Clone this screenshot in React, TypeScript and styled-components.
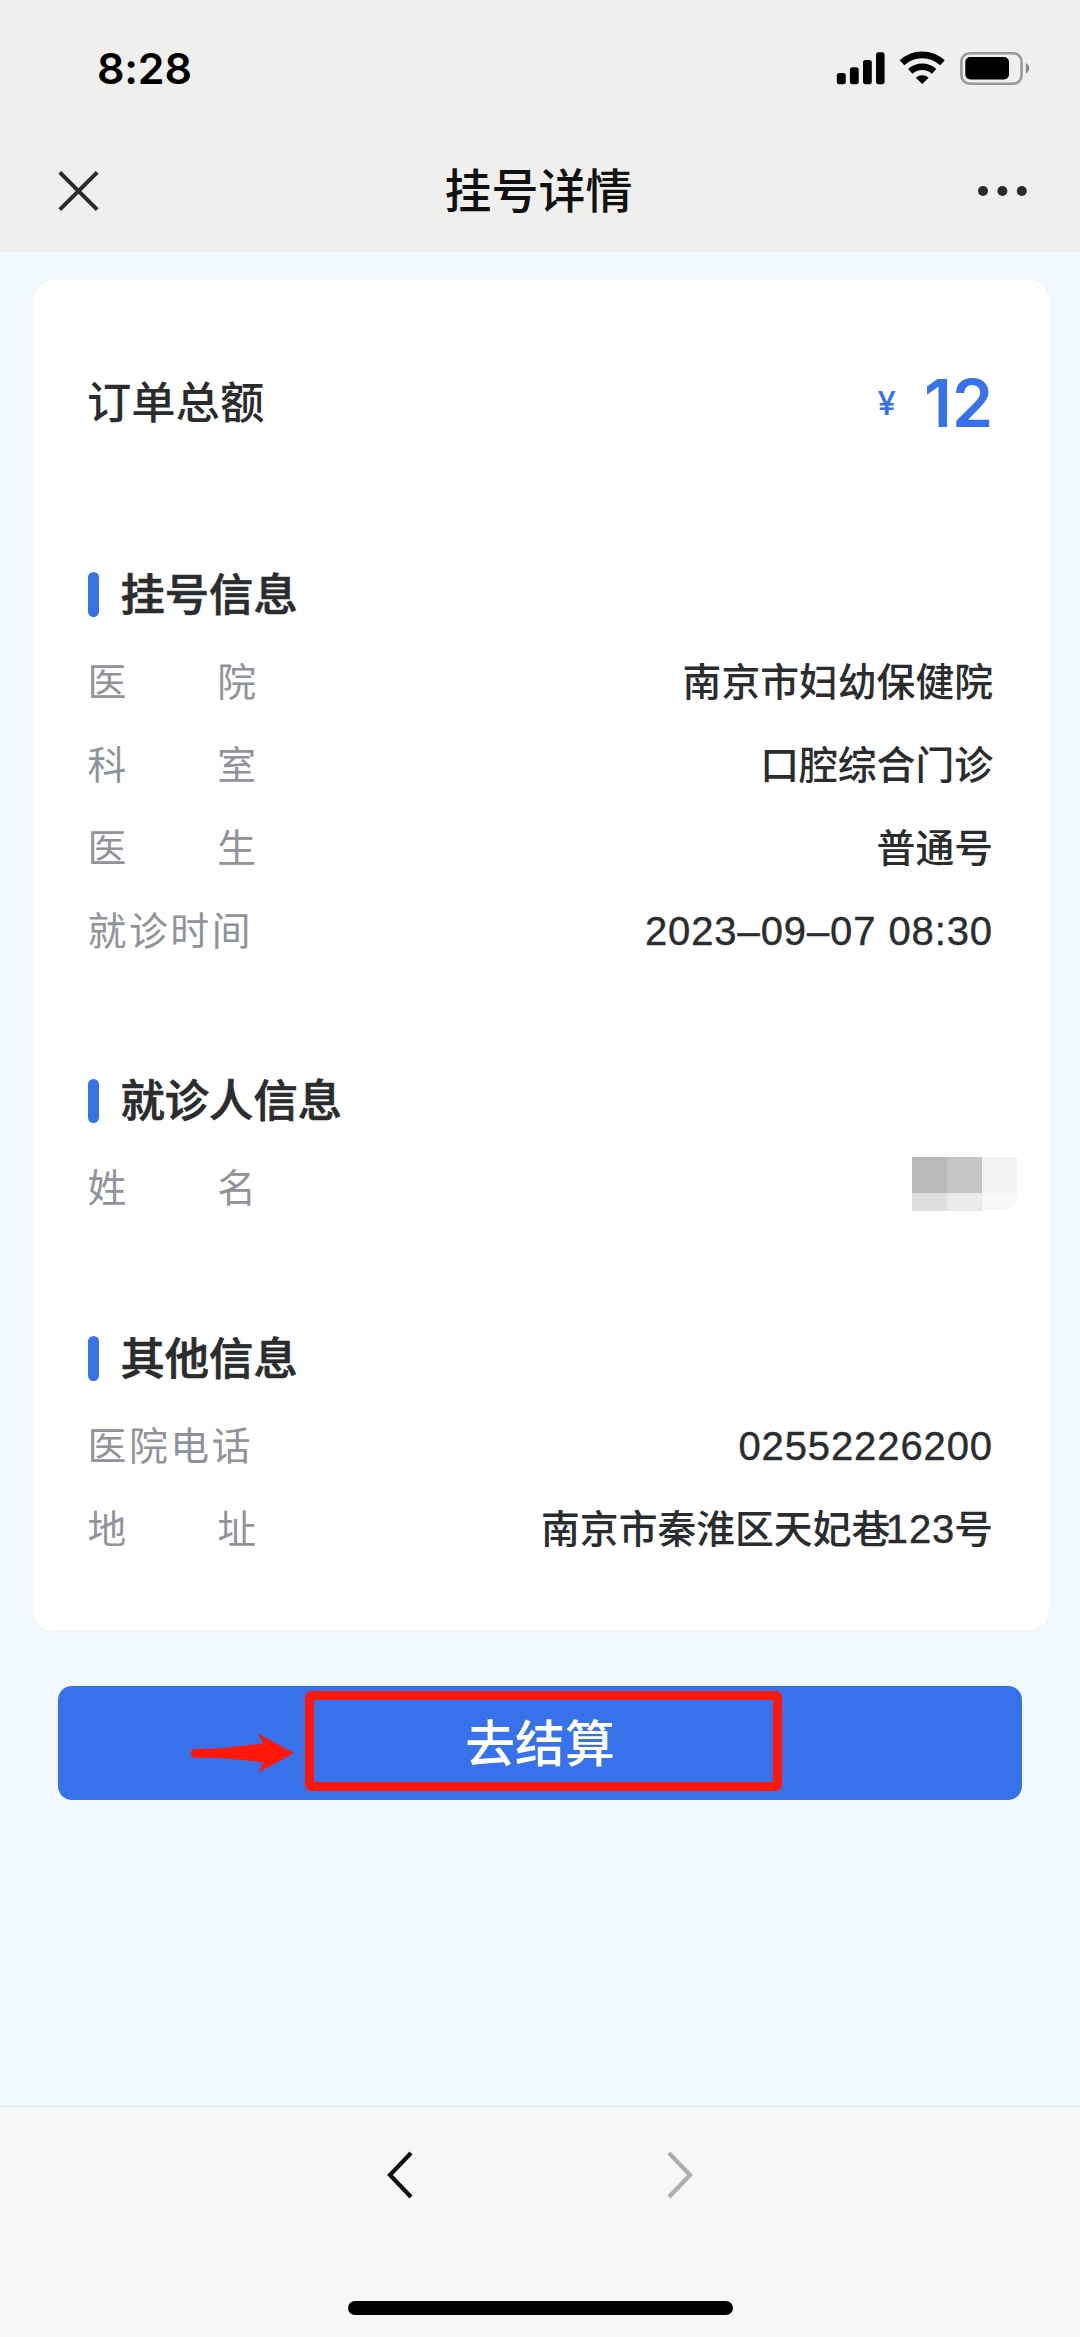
import React from 'react';
import styled, { createGlobalStyle } from 'styled-components';

const GlobalStyle = createGlobalStyle`
  * { box-sizing: border-box; }
  html, body { margin: 0; padding: 0; background: #f1f8fe; }
  body { font-family: Inter, 'Noto Sans CJK SC', sans-serif; }
`;

const Screen = styled.div`
  width: 1080px;
  height: 2337px;
  display: flex;
  flex-direction: column;
  background: #f1f8fe;
  overflow: hidden;
`;

const Header = styled.header`
  height: 252px;
  flex: none;
  background: #efefed;
`;

const StatusBar = styled.div`
  height: 136px;
  display: flex;
  align-items: center;
  justify-content: space-between;
  padding: 0 50px 0 97px;
`;

const Time = styled.span`
  font-size: 43px;
  font-weight: 600;
  line-height: 60px;
  letter-spacing: -0.2px;
  color: #000;
`;

const StatusIcons = styled.svg`
  display: block;
  width: 194px;
  height: 36px;
`;

const NavBar = styled.div`
  height: 110px;
  display: grid;
  grid-template-columns: 160px 1fr 160px;
  align-items: center;
  padding: 0 53px;
`;

const IconButton = styled.button<{ $end?: boolean }>`
  display: flex;
  justify-content: ${(p) => (p.$end ? 'flex-end' : 'flex-start')};
  border: 0;
  padding: 0;
  background: none;
`;

const PageTitle = styled.h1`
  margin: 0;
  padding-right: 3px;
  text-align: center;
  font-size: 47px;
  font-weight: 500;
  line-height: 64px;
  color: #111;
`;

const Content = styled.main`
  flex: 1;
  padding: 27.5px 31px 0 32.5px;
`;

const Card = styled.section`
  height: 1351.5px;
  padding: 82px 56px 0 55px;
  border-radius: 22px;
  background: #fff;
`;

const TotalRow = styled.div`
  height: 82px;
  display: flex;
  align-items: center;
  justify-content: space-between;
`;

const TotalLabel = styled.span`
  margin-left: -0.5px;
  font-size: 44.3px;
  font-weight: 500;
  line-height: 60px;
  color: #2b2c2e;
`;

const Amount = styled.span`
  display: flex;
  align-items: center;
  color: #3772ea;
  font-weight: 600;
  font-size: 66px;
  line-height: 80px;
`;

const Currency = styled.span`
  margin-right: 28px;
  font-size: 33px;
  font-weight: 500;
`;

const Group = styled.section<{ $gap: number }>`
  margin-top: ${(p) => p.$gap}px;
`;

const GroupTitle = styled.h2`
  height: 90px;
  margin: 0;
  display: flex;
  align-items: center;
  gap: 22px;
  font-size: 44.3px;
  font-weight: 500;
  line-height: 60px;
  color: #2b2c2e;
  -webkit-text-stroke: 0.7px #2b2c2e;

  &::before {
    content: '';
    width: 11px;
    height: 44.5px;
    border-radius: 5.5px;
    background: #3772ea;
  }
`;

const InfoRow = styled.div`
  height: 83px;
  display: flex;
  align-items: center;
  justify-content: space-between;
  font-size: 38.8px;
  line-height: 57px;
`;

const InfoLabel = styled.span<{ $wide: boolean }>`
  width: 168.5px;
  display: flex;
  justify-content: ${(p) => (p.$wide ? 'space-between' : 'flex-start')};
  gap: ${(p) => (p.$wide ? 0 : 2.6)}px;
  color: #909399;
`;

const InfoValue = styled.span`
  font-weight: 500;
  color: #2b2c2e;
  white-space: nowrap;
`;

const Digits = styled.span<{ $inset: boolean }>`
  margin: ${(p) => (p.$inset ? '0 -1px 0 -4.5px' : '0')};
  font-family: 'Liberation Sans', Arial, sans-serif;
  font-size: 40px;
  font-weight: 400;
  line-height: 0;
  letter-spacing: 0.9px;
  -webkit-text-stroke: 0.4px #2b2c2e;
`;

const Mosaic = styled.span`
  display: grid;
  grid-template-columns: repeat(3, 35px);
  grid-template-rows: 36px 18px;
  margin-right: -24px;
  margin-top: -7px;
  border-bottom-right-radius: 24px 12px;
  overflow: hidden;
`;

const Pixel = styled.i<{ $tone: string }>`
  background: ${(p) => p.$tone};
`;

const PayButton = styled.button`
  position: relative;
  width: 964px;
  height: 114px;
  margin: 55px 0 0 25.5px;
  padding: 0;
  border: 0;
  border-radius: 14px;
  background: #3772ea;
  color: #fff;
  font-family: inherit;
  font-size: 49.8px;
  font-weight: 500;
  line-height: 116px;
  text-align: center;
`;

const Highlight = styled.span`
  position: absolute;
  left: 246.5px;
  top: 5px;
  width: 477.5px;
  height: 100px;
  border: 9px solid #ff180a;
  border-radius: 6px;
`;

const Arrow = styled.svg`
  position: absolute;
  left: 132px;
  top: 46px;
  width: 106px;
  height: 42px;
`;

const Footer = styled.footer`
  height: 231px;
  flex: none;
  display: flex;
  flex-direction: column;
  align-items: center;
  justify-content: space-between;
  padding: 43px 0 22px;
  border-top: 1px solid #dfe5ec;
  background: #f7f7f7;
`;

const PageNav = styled.nav`
  width: 308px;
  display: flex;
  justify-content: space-between;
`;

const HomeIndicator = styled.div`
  width: 385px;
  height: 14px;
  border-radius: 7px;
  background: #000;
`;

type Row = { label: string; value?: string };
type Info = { title: string; gap: number; rows: Row[] };

const groups: Info[] = [
  {
    title: '挂号信息',
    gap: 106,
    rows: [
      { label: '医院', value: '南京市妇幼保健院' },
      { label: '科室', value: '口腔综合门诊' },
      { label: '医生', value: '普通号' },
      { label: '就诊时间', value: '2023–09–07 08:30' },
    ],
  },
  { title: '就诊人信息', gap: 84.5, rows: [{ label: '姓名' }] },
  {
    title: '其他信息',
    gap: 84.5,
    rows: [
      { label: '医院电话', value: '02552226200' },
      { label: '地址', value: '南京市秦淮区天妃巷123号' },
    ],
  },
];

const tones = ['#b9b9b9', '#c5c5c5', '#f2f2f2', '#dedede', '#ebebeb', '#f8f8f8'];

// Numbers inside a value get their own face; everything else keeps the body font.
function renderValue(value: string) {
  return value
    .split(/(\d[\d–: ]*\d)/)
    .filter(Boolean)
    .map((part, index) =>
      /^\d/.test(part) ? (
        <Digits key={part} $inset={index > 0}>
          {part}
        </Digits>
      ) : (
        part
      ),
    );
}

export default function App() {
  return (
    <Screen>
      <GlobalStyle />
      <Header>
        <StatusBar>
          <Time>8:28</Time>
          <StatusIcons viewBox="836 50 194 36">
            <rect x="836.8" y="73" width="9" height="11.2" rx="2.6" />
            <rect x="849.9" y="67.3" width="8.8" height="16.9" rx="2.6" />
            <rect x="863" y="60" width="8.8" height="24.2" rx="2.6" />
            <rect x="876" y="52.3" width="8.6" height="31.9" rx="2.6" />
            <path d="M902 62.8 A 29.5 29.5 0 0 1 942.4 62.8" fill="none" stroke="#000" strokeWidth="6.8" />
            <path d="M910.3 71.4 A 17.6 17.6 0 0 1 934.1 71.4" fill="none" stroke="#000" strokeWidth="6.6" />
            <path d="M915.8 77.8 A 9.6 9.6 0 0 1 928.6 77.8 L 922.2 84 Z" />
            <rect x="961.4" y="53.2" width="60.2" height="30.6" rx="8.5" fill="none" stroke="#999" strokeWidth="2.6" />
            <rect x="965.3" y="57" width="43.7" height="22.4" rx="5" />
            <path d="M1025.8 63 Q1029.2 64.8 1029.2 68.2 Q1029.2 71.8 1025.8 73.4 Z" fill="#888" />
          </StatusIcons>
        </StatusBar>
        <NavBar>
          <IconButton aria-label="关闭">
            <svg width="50" height="50" viewBox="0 0 50 50" fill="none" stroke="#2a2a2a" strokeWidth="4">
              <path d="M6.8 6.3 L44.2 43.7 M44.2 6.3 L6.8 43.7" />
            </svg>
          </IconButton>
          <PageTitle>挂号详情</PageTitle>
          <IconButton $end aria-label="更多">
            <svg width="50" height="12" viewBox="0 0 50 12" fill="#2a2a2a">
              <circle cx="6" cy="6" r="5" />
              <circle cx="25.4" cy="6" r="5" />
              <circle cx="44.8" cy="6" r="5" />
            </svg>
          </IconButton>
        </NavBar>
      </Header>
      <Content>
        <Card>
          <TotalRow>
            <TotalLabel>订单总额</TotalLabel>
            <Amount>
              <Currency>¥</Currency>12
            </Amount>
          </TotalRow>
          {groups.map((group) => (
            <Group key={group.title} $gap={group.gap}>
              <GroupTitle>{group.title}</GroupTitle>
              {group.rows.map((row) => (
                <InfoRow key={row.label}>
                  <InfoLabel $wide={row.label.length === 2}>
                    {[...row.label].map((char) => (
                      <span key={char}>{char}</span>
                    ))}
                  </InfoLabel>
                  {row.value ? (
                    <InfoValue>{renderValue(row.value)}</InfoValue>
                  ) : (
                    <Mosaic>
                      {tones.map((tone) => (
                        <Pixel key={tone} $tone={tone} />
                      ))}
                    </Mosaic>
                  )}
                </InfoRow>
              ))}
            </Group>
          ))}
        </Card>
        <PayButton>
          去结算
          <Highlight />
          <Arrow viewBox="190 1732 106 42">
            <path
              d="M195 1748.7 H214 Q222 1748.4 230 1747.2 L263.6 1743.4 L258 1733.4 L294 1753.3 L258 1772.4 L263.6 1762.2 L230 1758.8 Q222 1757.8 214 1757.7 H195 Q191 1757 191 1753.2 Q191 1749.4 195 1748.7 Z"
              fill="#ff180a"
            />
          </Arrow>
        </PayButton>
      </Content>
      <Footer>
        <PageNav>
          <svg width="28" height="50" viewBox="0 0 28 50" fill="none" stroke="#111" strokeWidth="4.2">
            <path d="M25 3 L4 25 L25 47" />
          </svg>
          <svg width="28" height="50" viewBox="0 0 28 50" fill="none" stroke="#adadad" strokeWidth="4.2">
            <path d="M3 3 L24 25 L3 47" />
          </svg>
        </PageNav>
        <HomeIndicator />
      </Footer>
    </Screen>
  );
}
